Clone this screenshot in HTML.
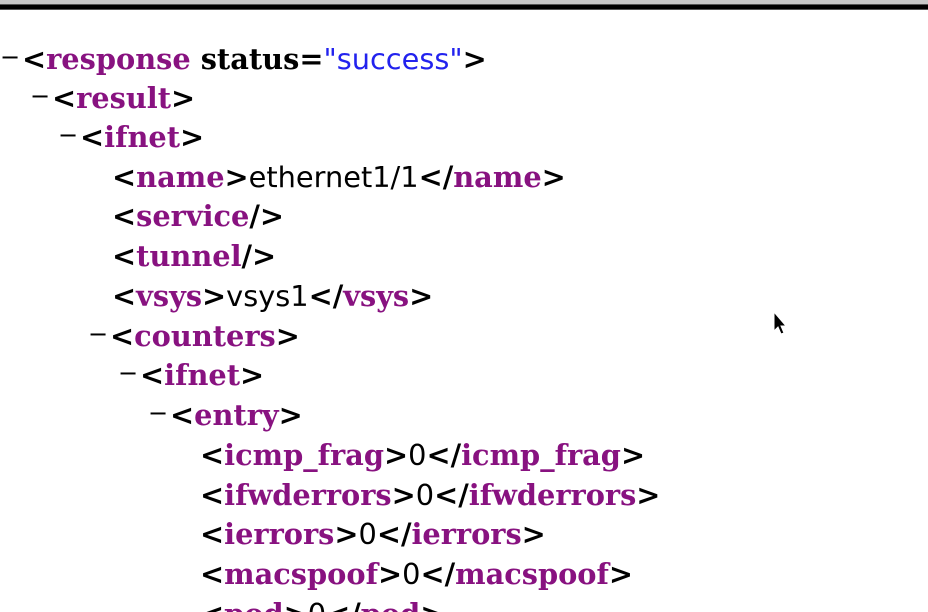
<!DOCTYPE html>
<html><head><meta charset="utf-8"><style>
html,body{margin:0;padding:0;background:#fff;width:928px;height:612px;overflow:hidden;position:relative}
.top{position:absolute;left:0;top:0;width:928px;height:4px;background:#c8c8c8}
.bar{position:absolute;left:0;top:4px;width:928px;height:6px;background:#000;border-top:1px solid #555;border-bottom:1px solid #555;box-sizing:border-box}
.l{position:absolute;white-space:nowrap;font-family:"DejaVu Serif","Liberation Serif",serif;font-weight:bold;font-size:28.8px;line-height:40px;color:#000;margin-top:-1px}
.t{color:#881280}
.v{font-family:"DejaVu Sans","Liberation Sans",sans-serif;font-weight:normal}
.s{color:#2222ee;font-family:"DejaVu Sans","Liberation Sans",sans-serif;font-weight:normal}
.m{font-family:"DejaVu Sans",sans-serif;font-weight:normal;display:inline-block;width:22px;font-size:24px;position:relative;top:-4px}
</style></head><body>
<div class="top"></div><div class="bar"></div>
<div class="l" style="left:0;top:40px"><span class="m">−</span>&lt;<span class="t">response</span> status=<span class="s">"success"</span>&gt;</div>
<div class="l" style="left:30px;top:79px"><span class="m">−</span>&lt;<span class="t">result</span>&gt;</div>
<div class="l" style="left:58px;top:118px"><span class="m">−</span>&lt;<span class="t">ifnet</span>&gt;</div>
<div class="l" style="left:112px;top:158px">&lt;<span class="t">name</span>&gt;<span class="v">ethernet1/1</span>&lt;/<span class="t">name</span>&gt;</div>
<div class="l" style="left:112px;top:197px">&lt;<span class="t">service</span>/&gt;</div>
<div class="l" style="left:112px;top:237px">&lt;<span class="t">tunnel</span>/&gt;</div>
<div class="l" style="left:112px;top:277px">&lt;<span class="t">vsys</span>&gt;<span class="v">vsys1</span>&lt;/<span class="t">vsys</span>&gt;</div>
<div class="l" style="left:88px;top:317px"><span class="m">−</span>&lt;<span class="t">counters</span>&gt;</div>
<div class="l" style="left:118px;top:356px"><span class="m">−</span>&lt;<span class="t">ifnet</span>&gt;</div>
<div class="l" style="left:148px;top:396px"><span class="m">−</span>&lt;<span class="t">entry</span>&gt;</div>
<div class="l" style="left:200px;top:436px">&lt;<span class="t">icmp_frag</span>&gt;<span class="v">0</span>&lt;/<span class="t">icmp_frag</span>&gt;</div>
<div class="l" style="left:200px;top:476px">&lt;<span class="t">ifwderrors</span>&gt;<span class="v">0</span>&lt;/<span class="t">ifwderrors</span>&gt;</div>
<div class="l" style="left:200px;top:515px">&lt;<span class="t">ierrors</span>&gt;<span class="v">0</span>&lt;/<span class="t">ierrors</span>&gt;</div>
<div class="l" style="left:200px;top:555px">&lt;<span class="t">macspoof</span>&gt;<span class="v">0</span>&lt;/<span class="t">macspoof</span>&gt;</div>
<div class="l" style="left:200px;top:595px">&lt;<span class="t">pod</span>&gt;<span class="v">0</span>&lt;/<span class="t">pod</span>&gt;</div>
<svg style="position:absolute;left:773px;top:311px" width="16" height="28" viewBox="0 0 16 28"><path d="M1 1 L1 20 L5 16 L8 23 L11 22 L8 15 L13 15 Z" fill="#000" stroke="#fff" stroke-width="1"/></svg>
</body></html>
